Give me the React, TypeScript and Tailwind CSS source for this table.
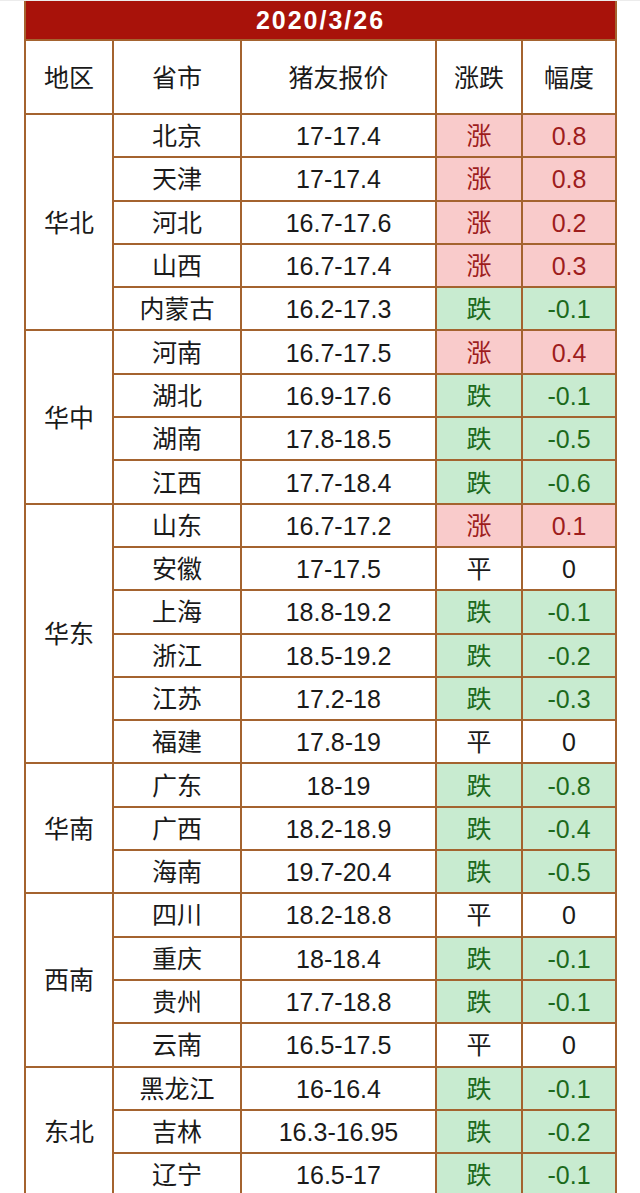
type Row = { city: string; price: string; trend: '涨' | '跌' | '平'; delta: string };
type Region = { name: string; rows: Row[] };

const data: Region[] = [
  {
    name: '华北',
    rows: [
      { city: '北京', price: '17-17.4', trend: '涨', delta: '0.8' },
      { city: '天津', price: '17-17.4', trend: '涨', delta: '0.8' },
      { city: '河北', price: '16.7-17.6', trend: '涨', delta: '0.2' },
      { city: '山西', price: '16.7-17.4', trend: '涨', delta: '0.3' },
      { city: '内蒙古', price: '16.2-17.3', trend: '跌', delta: '-0.1' },
    ],
  },
  {
    name: '华中',
    rows: [
      { city: '河南', price: '16.7-17.5', trend: '涨', delta: '0.4' },
      { city: '湖北', price: '16.9-17.6', trend: '跌', delta: '-0.1' },
      { city: '湖南', price: '17.8-18.5', trend: '跌', delta: '-0.5' },
      { city: '江西', price: '17.7-18.4', trend: '跌', delta: '-0.6' },
    ],
  },
  {
    name: '华东',
    rows: [
      { city: '山东', price: '16.7-17.2', trend: '涨', delta: '0.1' },
      { city: '安徽', price: '17-17.5', trend: '平', delta: '0' },
      { city: '上海', price: '18.8-19.2', trend: '跌', delta: '-0.1' },
      { city: '浙江', price: '18.5-19.2', trend: '跌', delta: '-0.2' },
      { city: '江苏', price: '17.2-18', trend: '跌', delta: '-0.3' },
      { city: '福建', price: '17.8-19', trend: '平', delta: '0' },
    ],
  },
  {
    name: '华南',
    rows: [
      { city: '广东', price: '18-19', trend: '跌', delta: '-0.8' },
      { city: '广西', price: '18.2-18.9', trend: '跌', delta: '-0.4' },
      { city: '海南', price: '19.7-20.4', trend: '跌', delta: '-0.5' },
    ],
  },
  {
    name: '西南',
    rows: [
      { city: '四川', price: '18.2-18.8', trend: '平', delta: '0' },
      { city: '重庆', price: '18-18.4', trend: '跌', delta: '-0.1' },
      { city: '贵州', price: '17.7-18.8', trend: '跌', delta: '-0.1' },
      { city: '云南', price: '16.5-17.5', trend: '平', delta: '0' },
    ],
  },
  {
    name: '东北',
    rows: [
      { city: '黑龙江', price: '16-16.4', trend: '跌', delta: '-0.1' },
      { city: '吉林', price: '16.3-16.95', trend: '跌', delta: '-0.2' },
      { city: '辽宁', price: '16.5-17', trend: '跌', delta: '-0.1' },
    ],
  },
];

const cell = 'border-2 border-[#a4632f] text-center align-middle p-0 pt-[2px]';

function trendClass(t: Row['trend']) {
  if (t === '涨') return 'bg-[#f9cbcb] text-[#9e1d1d]';
  if (t === '跌') return 'bg-[#c8ebd0] text-[#1c6a1c]';
  return 'bg-white text-[#1a1a1a]';
}

export default function App() {
  return (
    <div className="w-[640px] h-[1193px] overflow-hidden bg-white border-t border-[#ececec] pl-[24px]">
      <table
        className="table-fixed border-collapse w-[591px] text-[25px] leading-none text-[#1a1a1a]"
        style={{ fontFamily: '"Liberation Sans", "Noto Sans CJK SC", sans-serif' }}
      >
        <colgroup>
          <col className="w-[88px]" />
          <col className="w-[128px]" />
          <col className="w-[195px]" />
          <col className="w-[86px]" />
          <col className="w-[94px]" />
        </colgroup>
        <tbody>
          <tr className="h-[39px]">
            <td
              colSpan={5}
              className="border-2 border-[#a4632f] border-t-0 bg-[#a8120a] text-white text-center font-bold text-[25px] tracking-[2px]"
            >
              2020/3/26
            </td>
          </tr>
          <tr className="h-[74px]">
            <td className={cell}>地区</td>
            <td className={cell}>省市</td>
            <td className={cell}>猪友报价</td>
            <td className={cell}>涨跌</td>
            <td className={cell}>幅度</td>
          </tr>
          {data.map((region) =>
            region.rows.map((r, i) => (
              <tr key={region.name + r.city} className="h-[43.3px]">
                {i === 0 && (
                  <td rowSpan={region.rows.length} className={cell}>
                    {region.name}
                  </td>
                )}
                <td className={cell}>{r.city}</td>
                <td className={cell}>{r.price}</td>
                <td className={`${cell} ${trendClass(r.trend)}`}>{r.trend}</td>
                <td className={`${cell} ${trendClass(r.trend)}`}>{r.delta}</td>
              </tr>
            ))
          )}
        </tbody>
      </table>
    </div>
  );
}
